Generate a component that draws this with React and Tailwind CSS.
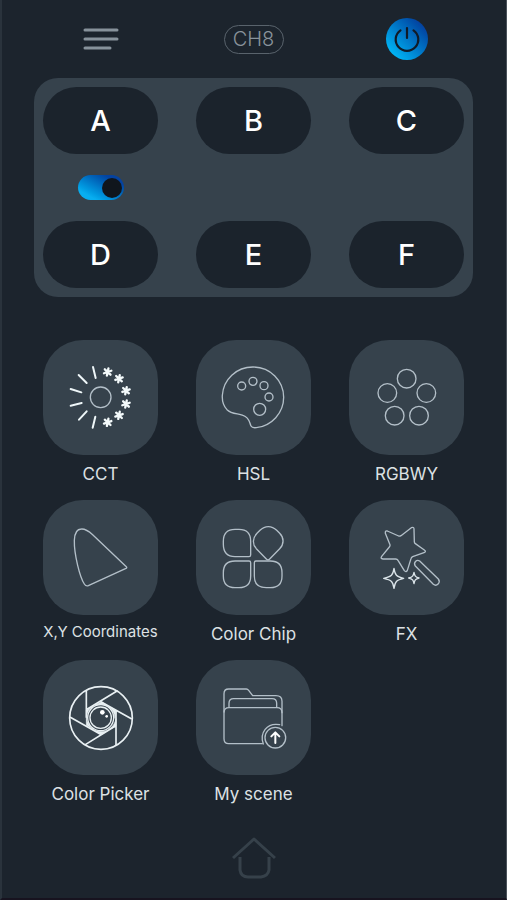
import { useState } from 'react';

const CHANNELS_TOP = ['A', 'B', 'C'];
const CHANNELS_BOTTOM = ['D', 'E', 'F'];

// All tile icons share one 345 unit square canvas
function Icon({ children, color = '#b3bfc8' }) {
  return (
    <svg
      viewBox="9 14 345 345"
      className="w-full h-full"
      fill="none"
      stroke={color}
      strokeWidth="4"
      strokeLinecap="round"
      strokeLinejoin="round"
      aria-hidden="true"
    >
      {children}
    </svg>
  );
}

function CctIcon() {
  const flakes = [[203, 110], [237, 130], [258, 166], [258, 206], [237, 240], [203, 261]];
  return (
    <Icon>
      <circle cx="182" cy="186" r="31" />
      <path
        stroke="#eef6f8"
        strokeWidth="6"
        d="M159 95l8 33M116 119l24 24M92 161l32 10M92 211l33-8M117 253l23-25M158 277l8-33"
      />
      {flakes.map(([x, y]) => (
        <path
          key={`${x}-${y}`}
          stroke="#f4fafb"
          strokeWidth="7"
          transform={`translate(${x} ${y}) rotate(12)`}
          d="M0-11V11M-10-6L10 6M-10 6L10-6"
        />
      ))}
    </Icon>
  );
}

function PaletteIcon() {
  return (
    <Icon>
      <path d="M174 272C169 262 170 246 150 240C132 234 116 236 102 223C90 210 87 196 88 180C91 132 130 95 180 95C232 95 272 136 272 186C272 233 236 272 190 277C182 278 177 278 174 272Z" />
      <circle cx="146" cy="152" r="12" />
      <circle cx="180" cy="138" r="12" />
      <circle cx="213" cy="151" r="12" />
      <circle cx="228" cy="185" r="12" />
      <circle cx="200" cy="222" r="18" />
    </Icon>
  );
}

function RgbwyIcon() {
  return (
    <Icon>
      <circle cx="182" cy="130" r="28" />
      <circle cx="124" cy="173" r="28" />
      <circle cx="241" cy="173" r="28" />
      <circle cx="146" cy="241" r="28" />
      <circle cx="219" cy="241" r="28" />
    </Icon>
  );
}

function CoordinatesIcon() {
  return (
    <Icon>
      <path d="M103 135C104 110 112 101 124 101C138 100 147 108 158 118L259 214Q262 217 258 219L145 271Q138 274 133 266C120 246 102 178 103 135Z" />
    </Icon>
  );
}

function ChipIcon() {
  return (
    <Icon>
      <path d="M173 179V138C173 115 161 102 138 102H126C103 102 91 115 91 138V147C91 171 103 184 126 184H168Q173 184 173 179Z" />
      <path d="M220 191L190 160C178 147 178 128 192 114L201 105C216 90 236 90 251 105L260 114C274 128 273 147 260 160L230 191Q225 196 220 191Z" />
      <path d="M173 202V242C173 265 161 277 138 277H126C103 277 91 265 91 242V232C91 209 103 197 126 197H168Q173 197 173 202Z" />
      <path d="M184 202V242C184 265 197 277 220 277H232C255 277 267 265 267 242V232C267 209 255 197 232 197H189Q184 197 184 202Z" />
    </Icon>
  );
}

function FxIcon() {
  return (
    <Icon>
      <path d="M124 107L158 122Q162 123 165 121L196 97Q204 94 204 101L205 139Q205 143 208 145L235 164Q242 169 234 172L200 184Q196 186 195 190L184 225Q180 232 175 226L156 195Q154 191 149 191L111 191Q102 190 107 183L130 155Q133 152 132 148L118 114Q117 105 124 107Z" />
      <path d="M208 212L262 267C272 275 285 262 277 251L221 197C212 191 201 202 208 212Z" />
      <path stroke="#dbe4e9" d="M144 219C147 239 151 244 173 249C151 254 147 259 144 279C141 259 137 254 113 249C137 244 141 239 144 219Z" />
      <path stroke="#dbe4e9" d="M204 231C206 242 208 245 219 248C208 251 206 254 204 265C202 254 200 251 188 248C200 245 202 242 204 231Z" />
    </Icon>
  );
}

function PickerIcon() {
  return (
    <Icon color="#e9f0f3">
      <circle cx="183" cy="188" r="94" strokeWidth="5" />
      <circle cx="182" cy="187" r="39" strokeWidth="4" />
      <circle cx="182" cy="187" r="32" strokeWidth="4" />
      {/* aperture blades */}
      <path strokeWidth="5" d="M139 107V186M231 107L141 162M274 190L184 140M228 269V165M136 268L226 212M91 186L184 238" />
      <path fill="#e9f0f3" strokeWidth="2" d="M139 165V187Q141 163 158 154ZM184 140L165 149Q187 145 202 151ZM228 165L207 155Q224 168 225 188ZM228 212V190Q224 211 207 222ZM184 238L203 226Q181 231 163 225ZM139 210V188Q143 209 160 222Z" />
      <circle cx="187" cy="171" r="7" fill="#fff" stroke="none" />
      <circle cx="200" cy="183" r="4" fill="#fff" stroke="none" />
    </Icon>
  );
}

function SceneIcon() {
  return (
    <Icon>
      <path d="M93 170V115Q93 101 107 101H160Q164 101 167 105L179 121H249Q267 121 267 138V211" />
      <path d="M108 156V144Q108 130 122 130H237Q251 130 251 144V156" />
      <path d="M208 265H107Q93 265 93 250V172Q93 157 108 157H252Q267 157 267 172" />
      <path d="M211 266C199 234 221 201 260 208" />
      <circle cx="247" cy="247" r="31" />
      <path stroke="#fff" strokeWidth="6" d="M247 263V232M235 243L247 231L259 243" />
    </Icon>
  );
}

const MODES = [
  { name: 'CCT', icon: CctIcon },
  { name: 'HSL', icon: PaletteIcon },
  { name: 'RGBWY', icon: RgbwyIcon },
  { name: 'X,Y Coordinates', icon: CoordinatesIcon, small: true },
  { name: 'Color Chip', icon: ChipIcon },
  { name: 'FX', icon: FxIcon },
  { name: 'Color Picker', icon: PickerIcon },
  { name: 'My scene', icon: SceneIcon },
];

function ChannelButton({ name }) {
  return (
    <button type="button" className="h-[67px] rounded-[34px] bg-[#1b232c] text-white text-[29px] font-medium">
      {name}
    </button>
  );
}

function ModeTile({ name, icon: ModeIcon, small }) {
  return (
    <button type="button" className="flex flex-col items-center gap-[7px] text-[#dde1e4]">
      <span className="block w-full aspect-square rounded-[40px] bg-[#36424c]">
        <ModeIcon />
      </span>
      <span className={small ? 'whitespace-nowrap text-[15px] leading-5' : 'whitespace-nowrap text-[17px] leading-6'}>
        {name}
      </span>
    </button>
  );
}

export default function App() {
  const [on, setOn] = useState(true);

  return (
    <div className="min-h-screen flex flex-col pl-8 pr-[33px] bg-[#1c242d] border-l-2 border-l-[#2a333c] border-r border-r-[#4a525a] border-b-2 border-b-[#17131f] font-['Inter',sans-serif]">
      <header className="grid grid-cols-3 gap-x-[38px] px-[9px] h-[78px] items-center justify-items-center">
        <button type="button" aria-label="Menu">
          <svg width="36" height="24" viewBox="0 0 36 24" stroke="#87929b" strokeWidth="3" strokeLinecap="round">
            <path d="M2 3H34M2 12H34M2 21H27" />
          </svg>
        </button>
        <button type="button" className="w-[60px] h-[29px] rounded-full border border-[#59636c] text-[#89939b] text-[20px] leading-none font-light">
          CH8
        </button>
        <button type="button" aria-label="Power" className="size-[42px] rounded-full bg-linear-to-tr from-[#00b4f4] from-15% to-[#0442a0] to-85%">
          <svg width="42" height="42" viewBox="0 0 42 42" fill="none" stroke="#101b28" strokeWidth="2.2" strokeLinecap="round">
            <path d="M14.5 12.3A11.3 11.3 0 1 0 27.5 12.3M21 10V20" />
          </svg>
        </button>
      </header>

      <section className="grid grid-cols-3 gap-x-[38px] p-[9px] rounded-[24px] bg-[#36424c]">
        {CHANNELS_TOP.map((name) => (
          <ChannelButton key={name} name={name} />
        ))}
        <label className="col-span-3 grid grid-cols-3 gap-x-[38px] h-[67px] items-center justify-items-center">
          <input
            type="checkbox"
            role="switch"
            aria-label="Channel switch"
            checked={on}
            onChange={(e) => setOn(e.target.checked)}
            className="appearance-none flex items-center justify-start checked:justify-end w-[46px] h-[25px] px-[2px] rounded-full bg-linear-to-tr from-[#08aef0] from-20% to-[#0442a0] to-80% before:block before:size-5 before:rounded-full before:bg-[#10161d]"
          />
        </label>
        {CHANNELS_BOTTOM.map((name) => (
          <ChannelButton key={name} name={name} />
        ))}
      </section>

      <main className="mt-[43px] grid grid-cols-3 gap-x-[38px] gap-y-[14px] px-[9px] items-start">
        {MODES.map((mode) => (
          <ModeTile key={mode.name} {...mode} />
        ))}
      </main>

      <nav className="mt-[31px] flex justify-center">
        <button type="button" aria-label="Home">
          <svg width="44" height="42" viewBox="0 0 44 42" fill="none" stroke="#36414a" strokeWidth="3" strokeLinejoin="round">
            <path d="M1 21L22 2L43 21M8 20V33Q9 40 16 40H29Q36 39 37 33V20" />
          </svg>
        </button>
      </nav>
    </div>
  );
}
